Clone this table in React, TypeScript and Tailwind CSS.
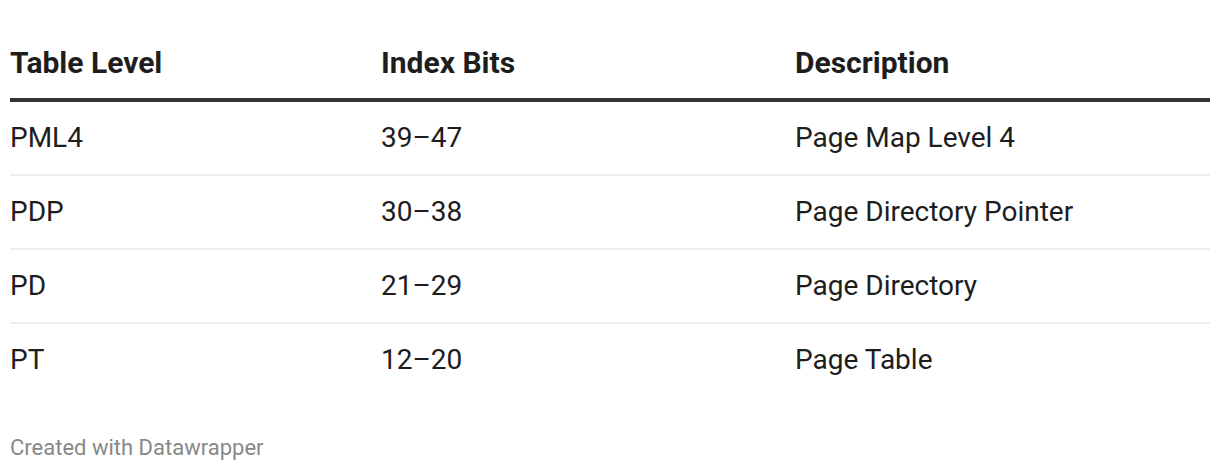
import React from "react";

const rows = [
  ["PML4", "39–47", "Page Map Level 4"],
  ["PDP", "30–38", "Page Directory Pointer"],
  ["PD", "21–29", "Page Directory"],
  ["PT", "12–20", "Page Table"],
];

export default function App() {
  return (
    <div className="w-[1220px] h-[472px] bg-white px-[10px] pt-[28px] text-[#1d1d1d]" style={{ fontFamily: "Roboto, 'Liberation Sans', sans-serif" }}>
      <div className="grid grid-cols-[371px_414px_1fr] h-[74px] items-center border-b-4 border-[#333333] text-[30px] font-bold leading-[36px]">
        <div>Table Level</div>
        <div>Index Bits</div>
        <div>Description</div>
      </div>
      {rows.map((r, i) => (
        <div
          key={i}
          className={`grid grid-cols-[371px_414px_1fr] items-center text-[28px] leading-[34px] ${i < rows.length - 1 ? "h-[74px] border-b-2 border-[#eeeeee]" : "h-[72px]"}`}
        >
          <div>{r[0]}</div>
          <div>{r[1]}</div>
          <div>{r[2]}</div>
        </div>
      ))}
      <div className="mt-[39px] text-[22px] leading-[26px] text-[#888888]">Created with Datawrapper</div>
    </div>
  );
}
